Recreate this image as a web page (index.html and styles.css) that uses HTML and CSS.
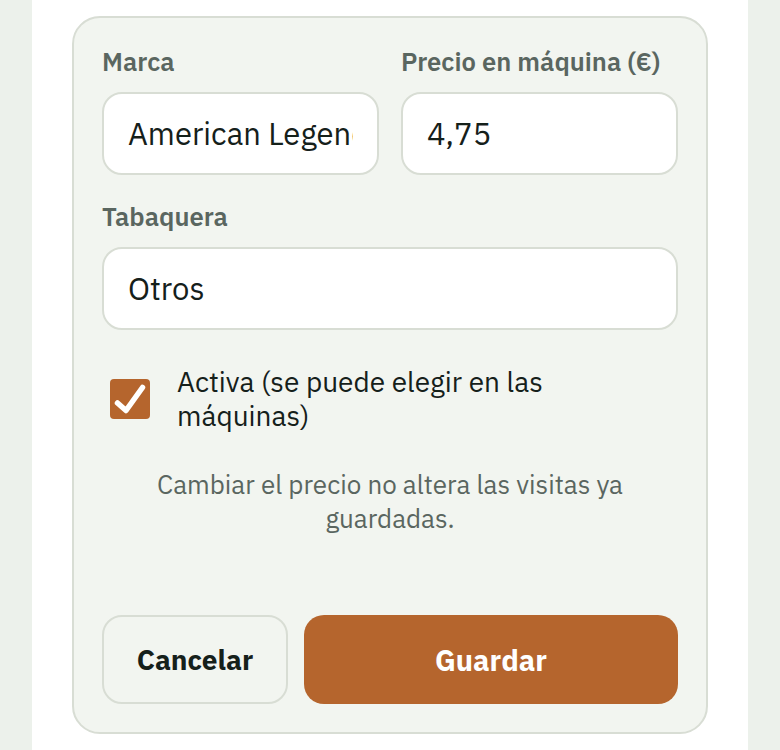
FILE: index.html
```html
<!DOCTYPE html>
<html lang="es">
<head>
<meta charset="utf-8">
<title>Editar marca</title>
<link rel="stylesheet" href="styles.css">
</head>
<body>
<div class="page">
  <form class="card">
    <div class="row">
      <div class="field">
        <label class="label">Marca</label>
        <div class="input"><span class="clip">American Legend</span></div>
      </div>
      <div class="field">
        <label class="label">Precio en máquina (€)</label>
        <div class="input">4,75</div>
      </div>
    </div>
    <div class="field">
      <label class="label">Tabaquera</label>
      <div class="input">Otros</div>
    </div>
    <div class="check">
      <span class="box">
        <svg width="40" height="40" viewBox="0 0 40 40"><path d="M7.5 24 L16 31.5 L32.5 8.5" fill="none" stroke="#fff" stroke-width="5.5" stroke-linecap="round" stroke-linejoin="round"/></svg>
      </span>
      <span class="check-text">Activa (se puede elegir en las máquinas)</span>
    </div>
    <p class="help">Cambiar el precio no altera las visitas ya guardadas.</p>
    <div class="actions">
      <button type="button" class="btn btn-cancel">Cancelar</button>
      <button type="button" class="btn btn-save">Guardar</button>
    </div>
  </form>
</div>
</body>
</html>
```
FILE: styles.css
```css
* { box-sizing: border-box; }
html, body { margin: 0; padding: 0; }
body {
  background: #ecf1eb;
  font-family: "IBM Plex Sans", Roboto, "Liberation Sans", sans-serif;
  color: #15201a;
}
.page {
  width: 716px;
  margin: 0 auto;
  min-height: 750px;
  background: #ffffff;
  padding: 16px 40px;
}
.card {
  background: #f2f5f0;
  border: 2px solid #d8ddd4;
  border-radius: 28px;
  padding: 28px 28px 28px;
  display: flex;
  flex-direction: column;
}
.row {
  display: grid;
  grid-template-columns: 1fr 1fr;
  gap: 22px;
}
.field {
  display: flex;
  flex-direction: column;
  min-width: 0;
}
.row + .field { margin-top: 26px; }
.label {
  font-size: 25.6px;
  line-height: 32px;
  font-weight: 600;
  color: #5a6660;
  margin-bottom: 14px;
  white-space: nowrap;
}
.input {
  height: 83px;
  background: #ffffff;
  border: 2px solid #d8ddd4;
  border-radius: 20px;
  padding: 0 24px;
  font-size: 31px;
  display: flex;
  align-items: center;
  overflow: hidden;
  white-space: nowrap;
  color: #15201a;
}
.clip { overflow: hidden; display: block; width: 100%; }
.check {
  display: flex;
  align-items: center;
  margin-top: 35px;
  padding-left: 8px;
}
.box {
  width: 40px;
  height: 40px;
  flex: none;
  background: #b5652d;
  border-radius: 4px;
  display: block;
}
.box svg { display: block; }
.check-text {
  margin-left: 27px;
  width: 420px;
  font-size: 28px;
  line-height: 34px;
  color: #15201a;
}
.help {
  margin: 34px 0 0;
  text-align: center;
  font-size: 26px;
  line-height: 34px;
  color: #5a6660;
}
.actions {
  display: flex;
  gap: 16px;
  margin-top: 80px;
}
.btn {
  height: 89px;
  border-radius: 20px;
  font-family: inherit;
  font-size: 28px;
  font-weight: 700;
  cursor: pointer;
}
.btn-cancel {
  width: 186px;
  background: #f2f5f0;
  border: 2px solid #d8ddd4;
  color: #15201a;
}
.btn-save {
  flex: 1;
  background: #b5652d;
  border: none;
  color: #ffffff;
  font-size: 29px;
}
```
